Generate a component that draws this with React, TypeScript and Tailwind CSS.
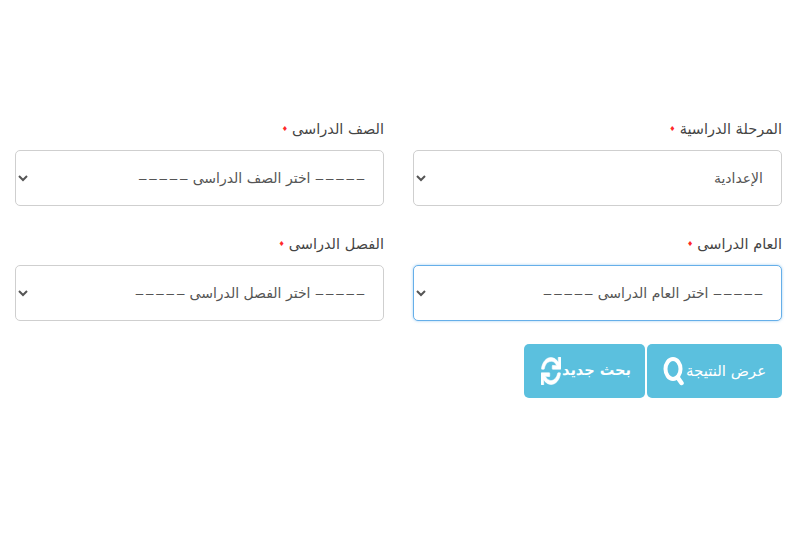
import { FaSync } from "react-icons/fa";

const dashes = "‒\u200A‒\u200A‒\u200A‒\u200A‒";
const fields = [
  { label: "المرحلة الدراسية", value: "الإعدادية", focus: false },
  { label: "الصف الدراسى", value: `${dashes} اختر الصف الدراسى ${dashes}`, focus: false },
  { label: "العام الدراسى", value: `${dashes} اختر العام الدراسى ${dashes}`, focus: true },
  { label: "الفصل الدراسى", value: `${dashes} اختر الفصل الدراسى ${dashes}`, focus: false },
];

function SearchIcon() {
  return (
    <svg viewBox="0 0 22 30" className="w-[22px] h-[30px]" fill="none" stroke="currentColor">
      <ellipse cx="10" cy="13" rx="7.5" ry="10" strokeWidth="4" />
      <line x1="15" y1="22" x2="18.5" y2="27" strokeWidth="4.5" strokeLinecap="round" />
    </svg>
  );
}

export default function App() {
  return (
    <div dir="rtl" className="w-[790px] h-[540px] bg-white pt-[118px] pr-[8px] pl-[15px] text-[#555] font-['DejaVu_Sans','Noto_Sans',sans-serif]">
      <div className="grid grid-cols-[369px_369px] gap-x-[29px] gap-y-[27px]">
        {fields.map((f) => (
          <div key={f.label} className="flex flex-col">
            <label className="h-[32px] pb-[10px] flex items-center gap-[4px] text-[14.5px] leading-[22px] text-[#444]">
              {f.label}
              <span className="text-[7px] text-[#ff2a2a]">♦</span>
            </label>
            <select
              defaultValue={f.value}
              className={`h-[56px] w-full rounded-[5px] bg-white pr-[14px] pl-[4px] text-[14px] text-[#555] border outline-none ${
                f.focus ? "border-[#66afe9] shadow-[0_0_3px_rgba(102,175,233,0.6)]" : "border-[#cfcfcf]"
              }`}
            >
              <option>{f.value}</option>
            </select>
          </div>
        ))}
      </div>
      <div className="flex gap-[2px] mt-[23px]">
        <button className="w-[135px] h-[54px] rounded-[5px] bg-[#5bc0de] text-white flex items-center justify-center gap-[1px] text-[15px]">
          <span>عرض النتيجة</span>
          <SearchIcon />
        </button>
        <button className="w-[121px] h-[54px] rounded-[5px] bg-[#5bc0de] text-white flex items-center justify-start gap-[1px] pr-[14px] text-[14.5px] font-bold">
          <span>بحث جديد</span>
          <FaSync className="w-[20px] h-[28px]" preserveAspectRatio="none" stroke="currentColor" strokeWidth={12} />
        </button>
      </div>
    </div>
  );
}
